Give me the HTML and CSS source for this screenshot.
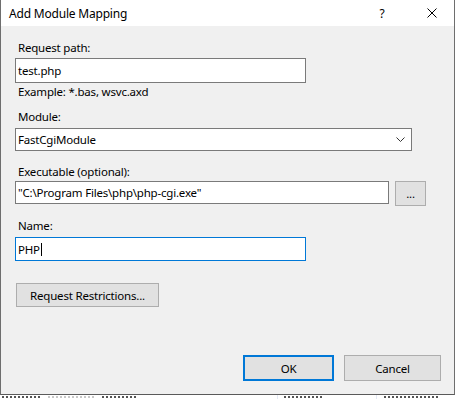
FILE: index.html
```html
<!DOCTYPE html>
<html lang="en">
<head>
  <meta charset="UTF-8">
  <title>Add Module Mapping</title>
  <link rel="stylesheet" href="styles.css">
</head>
<body>
  <div class="dialog">
    <div class="titlebar">
      <span class="title">Add Module Mapping</span>
      <span class="help">?</span>
      <span class="close">
        <svg width="10" height="10" viewBox="0 0 10 10">
          <path d="M0.5 0.5 L9.5 9.5 M9.5 0.5 L0.5 9.5" stroke="#000" stroke-width="1" fill="none"/>
        </svg>
      </span>
    </div>

    <div class="content">
      <label class="label label-first">Request path:</label>
      <div class="field field-short">test.php</div>
      <p class="hint">Example: *.bas, wsvc.axd</p>

      <label class="label label-module">Module:</label>
      <div class="field select">
        <span>FastCgiModule</span>
        <svg class="chevron" width="9" height="5" viewBox="0 0 9 5">
          <path d="M0.5 0.5 L4.5 4.5 L8.5 0.5" stroke="#333" stroke-width="1" fill="none"/>
        </svg>
      </div>

      <label class="label label-exec">Executable (optional):</label>
      <div class="exec-row">
        <div class="field field-exec">"C:\Program Files\php\php-cgi.exe"</div>
        <button class="btn btn-browse">...</button>
      </div>

      <label class="label label-name">Name:</label>
      <div class="field field-short field-focus">PHP<span class="caret"></span></div>

      <button class="btn btn-restrict">Request Restrictions...</button>

      <div class="footer">
        <button class="btn btn-ok">OK</button>
        <button class="btn btn-cancel">Cancel</button>
      </div>
    </div>
  </div>

  <!-- list rows peeking out under the dialog -->
  <div class="behind">
    <div class="col col-name"><i class="frag w40"></i><i class="frag w48 light"></i><i class="frag w34"></i></div>
    <div class="col col-state"><i class="frag w38"></i></div>
    <div class="col col-type"><i class="frag w56"></i></div>
  </div>
</body>
</html>
```

FILE: styles.css
```css
body {
  margin: 0;
  width: 457px;
  height: 399px;
  overflow: hidden;
  background: #ffffff;
  font-family: 'Noto Sans', 'Open Sans', sans-serif;
  font-size: 11.5px;
  letter-spacing: -0.2px;
  line-height: 15px;
  color: #000;
}

.dialog {
  width: 455px;
  height: 395px;
  box-sizing: border-box;
  border-left: 1px solid #6e6e6e;
  border-right: 1px solid #6e6e6e;
  border-bottom: 1px solid #5a5a5a;
  background: #f0f0f0;
  display: flex;
  flex-direction: column;
}

.titlebar {
  height: 26px;
  background: #ffffff;
  display: flex;
  align-items: center;
  flex-shrink: 0;
  font-size: 12px;
}

.title {
  padding-left: 8px;
  flex: 1;
}

.help {
  width: 10px;
  text-align: center;
  margin-right: 40px;
}

.close {
  display: flex;
  margin-right: 17px;
}

.content {
  flex: 1;
  display: flex;
  flex-direction: column;
  align-items: flex-start;
  padding: 0 13px 13px 14px;
}

.label {
  display: block;
  margin-left: 3px;
}

.label-first { margin-top: 14px; margin-bottom: 3px; }
.label-module { margin-top: 10px; margin-bottom: 4px; }
.label-exec { margin-top: 13px; margin-bottom: 2px; }
.label-name { margin-top: 12px; margin-bottom: 4px; }

.hint {
  margin: 1px 0 0 3px;
}

.field {
  box-sizing: border-box;
  background: #ffffff;
  border: 1px solid #7a7a7a;
  padding: 0 2px;
  display: flex;
  align-items: center;
  white-space: nowrap;
}

.field-short {
  width: 291px;
  height: 25px;
}

.field-focus {
  border-color: #0078d7;
  height: 24px;
}

.caret {
  display: inline-block;
  width: 1px;
  height: 13px;
  margin-left: 1px;
  background: #000;
}

.select {
  width: 397px;
  height: 23px;
  justify-content: space-between;
}

.chevron {
  margin-right: 4px;
}

.exec-row {
  display: flex;
  align-items: flex-start;
}

.field-exec {
  width: 374px;
  height: 23px;
}

.btn {
  box-sizing: border-box;
  font-family: inherit;
  font-size: 11.5px;
  letter-spacing: -0.2px;
  line-height: 15px;
  color: #000;
  background: #e1e1e1;
  border: 1px solid #adadad;
  border-radius: 0;
  padding: 0;
  margin: 0;
}

.btn-browse {
  width: 31px;
  height: 25px;
  margin-left: 6px;
}

.btn-restrict {
  width: 143px;
  height: 24px;
  margin: 22px 0 0 1px;
}

.footer {
  margin-top: auto;
  align-self: flex-end;
  display: flex;
  gap: 10px;
}

.btn-ok {
  width: 91px;
  height: 26px;
  border: 2px solid #0078d7;
}

.btn-cancel {
  width: 97px;
  height: 26px;
}

.behind {
  height: 4px;
  display: flex;
}

.col {
  display: flex;
  gap: 6px;
  padding-top: 1px;
  box-sizing: border-box;
}

.col-name {
  width: 278px;
  padding-left: 2px;
  border-right: 1px solid #e3e8f4;
}

.col-state {
  width: 99px;
  padding-left: 6px;
  border-right: 1px solid #e3e8f4;
}

.col-type {
  padding-left: 7px;
}

.frag {
  display: block;
  height: 2px;
  background: repeating-linear-gradient(90deg, #555 0 2px, transparent 2px 4px);
}

.frag.light {
  background: repeating-linear-gradient(90deg, #c8c8c8 0 2px, transparent 2px 4px);
}

.w34 { width: 34px; }
.w38 { width: 38px; }
.w40 { width: 40px; }
.w48 { width: 48px; }
.w56 { width: 56px; }
```
